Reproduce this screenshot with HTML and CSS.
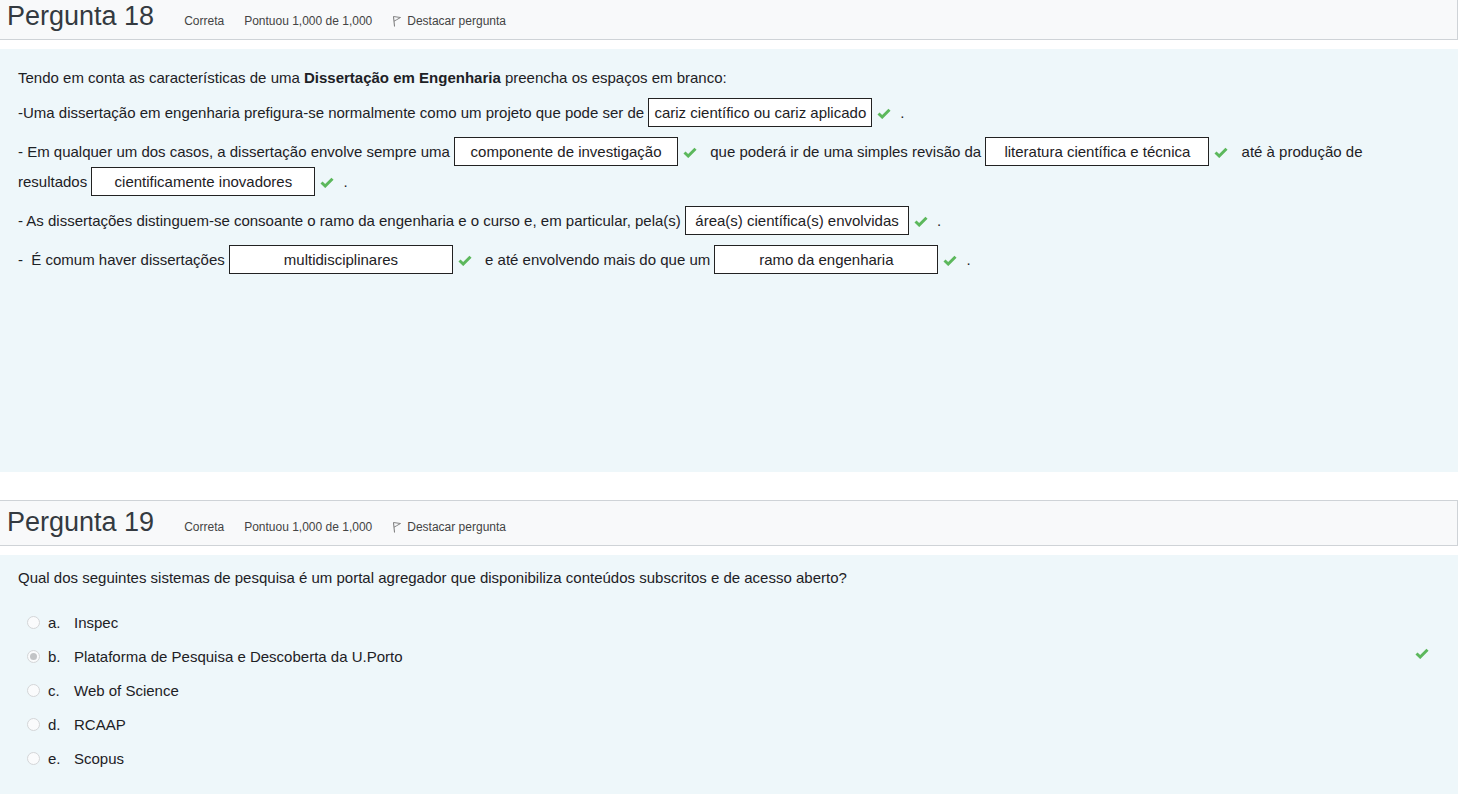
FILE: index.html
```html
<!DOCTYPE html>
<html lang="pt">
<head>
<meta charset="utf-8">
<title>Perguntas</title>
<link rel="stylesheet" href="styles.css">
</head>
<body>
<div class="page">
  <div class="que">
    <div class="info">
      <h3 class="qno">Pergunta 18</h3>
      <span class="meta">Correta</span>
      <span class="meta">Pontuou 1,000 de 1,000</span>
      <span class="meta flagged"><svg class="flag" width="10" height="12" viewBox="0 0 10 12"><path d="M1.5 1.5 L2.5 11.5" stroke="#777" stroke-width="1" fill="none"/><path d="M1.5 1.5 L8.5 2.5 L4.5 4.8 L2 6.2" stroke="#777" stroke-width="0.9" fill="none" stroke-linejoin="round"/></svg>Destacar pergunta</span>
    </div>
    <div class="content content-tall">
      <p class="line line-intro">Tendo em conta as características de uma <b>Dissertação em Engenharia</b> preencha os espaços em branco:</p>
      <p class="line">-Uma dissertação em engenharia prefigura-se normalmente como um projeto que pode ser de <span class="blank">cariz científico ou cariz aplicado</span><span class="ok"><svg width="14" height="11" viewBox="0 0 14 11"><path d="M1.5 5.5 L5.2 9 L12.5 1.8" stroke="#5cb85c" stroke-width="3" fill="none"/></svg></span>.</p>
      <p class="line">- Em qualquer um dos casos, a dissertação envolve sempre uma <span class="blank">componente de investigação</span><span class="ok"><svg width="14" height="11" viewBox="0 0 14 11"><path d="M1.5 5.5 L5.2 9 L12.5 1.8" stroke="#5cb85c" stroke-width="3" fill="none"/></svg></span> que poderá ir de uma simples revisão da <span class="blank">literatura científica e técnica</span><span class="ok"><svg width="14" height="11" viewBox="0 0 14 11"><path d="M1.5 5.5 L5.2 9 L12.5 1.8" stroke="#5cb85c" stroke-width="3" fill="none"/></svg></span> <span>até à produção de</span><br><span>resultados</span> <span class="blank">cientificamente inovadores</span><span class="ok"><svg width="14" height="11" viewBox="0 0 14 11"><path d="M1.5 5.5 L5.2 9 L12.5 1.8" stroke="#5cb85c" stroke-width="3" fill="none"/></svg></span>.</p>
      <p class="line">- As dissertações distinguem-se consoante o ramo da engenharia e o curso e, em particular, pela(s) <span class="blank">área(s) científica(s) envolvidas</span><span class="ok"><svg width="14" height="11" viewBox="0 0 14 11"><path d="M1.5 5.5 L5.2 9 L12.5 1.8" stroke="#5cb85c" stroke-width="3" fill="none"/></svg></span>.</p>
      <p class="line">-&nbsp; É comum haver dissertações <span class="blank">multidisciplinares</span><span class="ok"><svg width="14" height="11" viewBox="0 0 14 11"><path d="M1.5 5.5 L5.2 9 L12.5 1.8" stroke="#5cb85c" stroke-width="3" fill="none"/></svg></span> e até envolvendo mais do que um <span class="blank">ramo da engenharia</span><span class="ok"><svg width="14" height="11" viewBox="0 0 14 11"><path d="M1.5 5.5 L5.2 9 L12.5 1.8" stroke="#5cb85c" stroke-width="3" fill="none"/></svg></span>.</p>
    </div>
  </div>

  <div class="que">
    <div class="info">
      <h3 class="qno">Pergunta 19</h3>
      <span class="meta">Correta</span>
      <span class="meta">Pontuou 1,000 de 1,000</span>
      <span class="meta flagged"><svg class="flag" width="10" height="12" viewBox="0 0 10 12"><path d="M1.5 1.5 L2.5 11.5" stroke="#777" stroke-width="1" fill="none"/><path d="M1.5 1.5 L8.5 2.5 L4.5 4.8 L2 6.2" stroke="#777" stroke-width="0.9" fill="none" stroke-linejoin="round"/></svg>Destacar pergunta</span>
    </div>
    <div class="content content-mc">
      <p class="qtext">Qual dos seguintes sistemas de pesquisa é um portal agregador que disponibiliza conteúdos subscritos e de acesso aberto?</p>
      <div class="answers">
        <div class="opt"><span class="radio"></span><span class="letter">a.</span><span class="label">Inspec</span></div>
        <div class="opt"><span class="radio radio-on"></span><span class="letter">b.</span><span class="label">Plataforma de Pesquisa e Descoberta da U.Porto</span><span class="opt-ok"><svg width="14" height="11" viewBox="0 0 14 11"><path d="M1.5 5.5 L5.2 9 L12.5 1.8" stroke="#5cb85c" stroke-width="3" fill="none"/></svg></span></div>
        <div class="opt"><span class="radio"></span><span class="letter">c.</span><span class="label">Web of Science</span></div>
        <div class="opt"><span class="radio"></span><span class="letter">d.</span><span class="label">RCAAP</span></div>
        <div class="opt"><span class="radio"></span><span class="letter">e.</span><span class="label">Scopus</span></div>
      </div>
    </div>
  </div>
</div>
</body>
</html>
```
FILE: styles.css
```css
html, body {
  margin: 0;
  padding: 0;
  background: #fff;
}
body {
  font-family: "Liberation Sans", Arial, sans-serif;
  font-size: 15px;
  color: #1d2125;
  overflow: hidden;
}
.page {
  width: 1458px;
  margin-top: -6px;
}
.que {
  margin-bottom: 28px;
}
.info {
  box-sizing: border-box;
  height: 46px;
  background: #f8f9fa;
  border: 1px solid #cfd3d7;
  border-left: none;
  display: flex;
  align-items: baseline;
  padding: 0 0 0 7px;
}
.qno {
  margin: 0;
  font-size: 27px;
  font-weight: normal;
  line-height: 43px;
  color: #343a40;
  margin-right: 30px;
}
.meta {
  font-size: 12px;
  color: #444;
  margin-right: 20px;
}
.flagged {
  display: inline-flex;
  align-items: baseline;
}
.flag {
  margin-right: 5px;
  position: relative;
  top: 2px;
}
.content {
  margin-top: 9px;
  background: #eef7fa;
  padding: 18px 35px 0 18px;
}
.content-tall {
  height: 405px;
}
.content-mc {
  padding-top: 12px;
  padding-right: 29px;
  height: 240px;
}
.line {
  margin: 0 0 9px 0;
  line-height: 30px;
}
.line-intro {
  line-height: 22px;
}
.line .blank {
  display: inline-block;
  box-sizing: border-box;
  width: 224px;
  height: 29px;
  line-height: 27px;
  border: 1px solid #222;
  background: #fff;
  text-align: center;
  vertical-align: baseline;
  white-space: nowrap;
  color: #1d2125;
}
.ok {
  display: inline-block;
  width: 18px;
  height: 11px;
  margin: 0 5px 0 5px;
  vertical-align: -1px;
  line-height: 11px;
}
.qtext {
  margin: 0;
  line-height: 22px;
}
.answers {
  margin-top: 16px;
}
.opt {
  display: flex;
  align-items: center;
  height: 34px;
  padding-left: 9px;
}
.radio {
  box-sizing: border-box;
  width: 13px;
  height: 13px;
  border-radius: 50%;
  border: 1px solid #d4d6d8;
  background: #fafbfc;
  margin-right: 8px;
  display: flex;
  align-items: center;
  justify-content: center;
}
.radio-on::after {
  content: "";
  width: 7px;
  height: 7px;
  border-radius: 50%;
  background: #c2c4c6;
}
.letter {
  width: 26px;
}
.label {
  color: #1d2125;
}
.opt-ok {
  margin-left: auto;
  display: flex;
  margin-top: -5px;
}
```
